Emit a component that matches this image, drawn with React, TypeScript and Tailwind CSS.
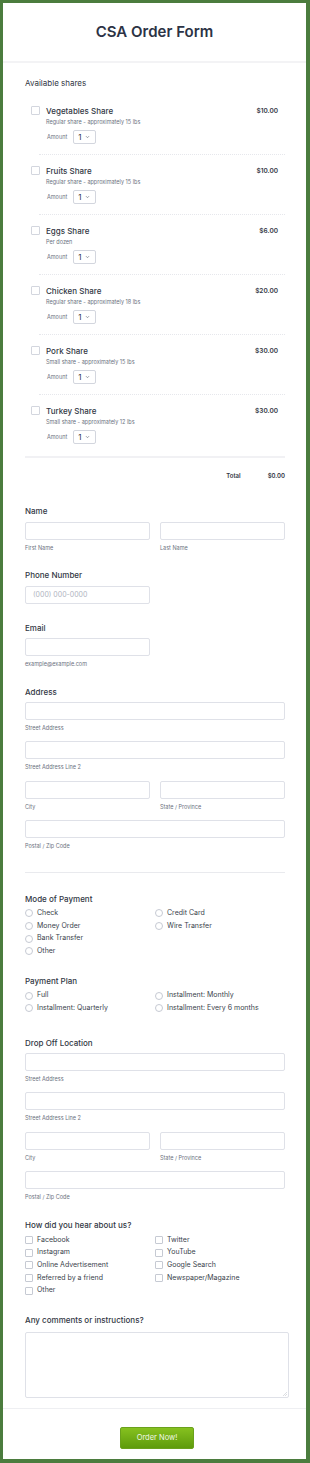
import React from "react";

const shares = [
  { name: "Vegetables Share", desc: "Regular share - approximately 15 lbs", price: "$10.00" },
  { name: "Fruits Share", desc: "Regular share - approximately 15 lbs", price: "$10.00" },
  { name: "Eggs Share", desc: "Per dozen", price: "$6.00" },
  { name: "Chicken Share", desc: "Regular share - approximately 18 lbs", price: "$20.00" },
  { name: "Pork Share", desc: "Small share - approximately 15 lbs", price: "$30.00" },
  { name: "Turkey Share", desc: "Small share - approximately 12 lbs", price: "$30.00" },
];

function Label({ children, className = "" }: { children: React.ReactNode; className?: string }) {
  return <div className={`text-[8px] leading-[12px] font-medium text-[#323744] ${className}`}>{children}</div>;
}

function Sub({ children }: { children: React.ReactNode }) {
  return <div className="mt-[4px] text-[5.5px] leading-[9px] text-[#6b7280]">{children}</div>;
}

function Box({ className = "", placeholder }: { className?: string; placeholder?: string }) {
  return (
    <div className={`h-[18px] rounded-[2px] border border-[#dfe1e8] bg-white flex items-center px-[7px] ${className}`}>
      {placeholder && <span className="text-[7px] text-[#b0b4c0]">{placeholder}</span>}
    </div>
  );
}

function Field({ sub, className = "", mt }: { sub: string; className?: string; mt: string }) {
  return (
    <div className={`${mt} ${className}`}>
      <Box />
      <Sub>{sub}</Sub>
    </div>
  );
}

function AddressBlock() {
  return (
    <>
      <Field mt="mt-[4px]" sub="Street Address" />
      <Field mt="mt-[8px]" sub="Street Address Line 2" />
      <div className="mt-[9px] grid grid-cols-2 gap-x-[10px]">
        <Field mt="" sub="City" />
        <Field mt="" sub="State / Province" />
      </div>
      <Field mt="mt-[8px]" sub="Postal / Zip Code" />
    </>
  );
}

function Radio({ label }: { label: string }) {
  return (
    <div className="h-[12.7px] flex items-center">
      <span className="w-[8px] h-[8px] rounded-full border border-[#c6cad3] bg-white shrink-0" />
      <span className="ml-[4px] text-[7px] text-[#3a3f4c]">{label}</span>
    </div>
  );
}

function Check({ label }: { label: string }) {
  return (
    <div className="h-[12.7px] flex items-center">
      <span className="w-[8px] h-[8px] rounded-[1px] border border-[#c6cad3] bg-white shrink-0" />
      <span className="ml-[4px] text-[7px] text-[#3a3f4c]">{label}</span>
    </div>
  );
}

function ShareItem({ s }: { s: (typeof shares)[number] }) {
  return (
    <div className="pl-[6px]">
      <div className="flex items-start">
        <span className="mt-[1px] w-[9px] h-[9px] rounded-[1px] border border-[#d3d6de] bg-white shrink-0" />
        <div className="ml-[6px] flex-1">
          <div className="flex justify-between items-center pr-[7px] leading-[12px]">
            <span className="text-[8px] font-medium text-[#323744]">{s.name}</span>
            <span className="text-[6.5px] font-semibold text-[#323744]">{s.price}</span>
          </div>
          <div className="mt-[1px] text-[5.5px] leading-[9px] text-[#6b7280]">{s.desc}</div>
          <div className="mt-[3px] h-[14px] flex items-center">
            <span className="ml-[1px] text-[5.5px] text-[#6b7280]">Amount</span>
            <div className="ml-[6px] w-[23px] h-[14px] rounded-[2px] border border-[#d3d6de] flex items-center pl-[4px]">
              <span className="text-[8px] text-[#323744]">1</span>
              <svg className="ml-[4px]" width="5" height="4" viewBox="0 0 5 4">
                <path d="M1 1.2 L2.5 2.7 L4 1.2" stroke="#6b7280" strokeWidth="0.7" fill="none" />
              </svg>
            </div>
          </div>
        </div>
      </div>
    </div>
  );
}

export default function App() {
  return (
    <div className="h-[1463px] overflow-hidden bg-[#4b7c3e] pt-[3px] pl-[3px] pr-[4px] pb-[4px] font-['Inter','Liberation_Sans',sans-serif]">
      <div className="h-[1456px] bg-white flex flex-col">
        <div className="h-[60px] border-b-2 border-[#f3f3f5] flex items-center justify-center">
          <h1 className="text-[15px] font-semibold text-[#2c3345]">CSA Order Form</h1>
        </div>

        <div className="pl-[22px] pr-[21px] pt-[14px]">
          <Label className="font-normal">Available shares</Label>
          <div className="mt-[16px]">
            {shares.map((s, i) => (
              <div key={s.name}>
                {i > 0 && <div className="my-[10px] ml-[14px] border-t border-dotted border-[#e6e7ec]" />}
                <ShareItem s={s} />
              </div>
            ))}
          </div>
          <div className="mt-[12px] h-[2px] bg-[#f1f1f4]" />
          <div className="mt-[11px] h-[12px] flex items-center justify-end text-[6px] font-semibold text-[#323744]">
            <span>Total</span>
            <span className="ml-[27px]">$0.00</span>
          </div>

          <Label className="mt-[24px]">Name</Label>
          <div className="mt-[5px] grid grid-cols-2 gap-x-[10px]">
            <div>
              <Box />
              <Sub>First Name</Sub>
            </div>
            <div>
              <Box />
              <Sub>Last Name</Sub>
            </div>
          </div>

          <Label className="mt-[16px]">Phone Number</Label>
          <Box className="mt-[5px] w-[125px]" placeholder="(000) 000-0000" />

          <Label className="mt-[18px]">Email</Label>
          <Box className="mt-[4px] w-[125px]" />
          <Sub>example@example.com</Sub>

          <Label className="mt-[17px]">Address</Label>
          <AddressBlock />

          <div className="mt-[21px] h-px bg-[#e9eaee]" />

          <Label className="mt-[20px]">Mode of Payment</Label>
          <div className="mt-[2px] grid grid-cols-2">
            <div>
              <Radio label="Check" />
              <Radio label="Money Order" />
              <Radio label="Bank Transfer" />
              <Radio label="Other" />
            </div>
            <div>
              <Radio label="Credit Card" />
              <Radio label="Wire Transfer" />
            </div>
          </div>

          <Label className="mt-[17px]">Payment Plan</Label>
          <div className="mt-[2.5px] grid grid-cols-2">
            <div>
              <Radio label="Full" />
              <Radio label="Installment: Quarterly" />
            </div>
            <div>
              <Radio label="Installment: Monthly" />
              <Radio label="Installment: Every 6 months" />
            </div>
          </div>

          <Label className="mt-[22px]">Drop Off Location</Label>
          <AddressBlock />

          <Label className="mt-[17px]">How did you hear about us?</Label>
          <div className="mt-[3px] grid grid-cols-2">
            <div>
              <Check label="Facebook" />
              <Check label="Instagram" />
              <Check label="Online Advertisement" />
              <Check label="Referred by a friend" />
              <Check label="Other" />
            </div>
            <div>
              <Check label="Twitter" />
              <Check label="YouTube" />
              <Check label="Google Search" />
              <Check label="Newspaper/Magazine" />
            </div>
          </div>

          <Label className="mt-[17px]">Any comments or instructions?</Label>
          <div className="relative mt-[6px] w-[264px] h-[66px]">
            <textarea className="block w-full h-full rounded-[2px] border border-[#dfe1e8] resize-none" />
            <svg className="absolute right-[2px] bottom-[2px]" width="4" height="4" viewBox="0 0 4 4">
              <path d="M4 0 L0 4 M4 2 L2 4" stroke="#c4c7cf" strokeWidth="0.6" />
            </svg>
          </div>
        </div>

        <div className="mt-[10px] border-t border-[#eeeff2] pt-[13px] pl-[117px]">
          <button className="w-[74px] h-[22px] rounded-[2px] border border-[#6aa11c] bg-gradient-to-b from-[#86c11f] to-[#5e9b0b] text-[7.5px] text-[#f2f8e6]">
            Order Now!
          </button>
        </div>
      </div>
    </div>
  );
}
